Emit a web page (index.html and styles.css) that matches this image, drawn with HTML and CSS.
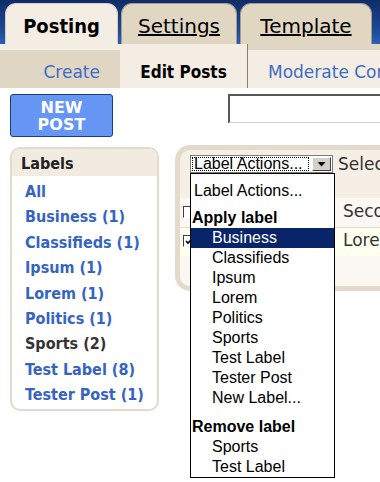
FILE: index.html
```html
<!DOCTYPE html>
<html>
<head>
<meta charset="utf-8">
<title>Edit Posts</title>
<link rel="stylesheet" href="styles.css">
</head>
<body>
<div class="topbar">
  <div class="tab tab-posting active">Posting</div>
  <div class="tab tab-settings"><a class="tab-link">Settings</a></div>
  <div class="tab tab-template"><a class="tab-link">Template</a></div>
</div>
<div class="subnav">
  <div class="sub sub-create"><a class="sub-link">Create</a></div>
  <div class="sub sub-edit">Edit Posts</div>
  <div class="sub sub-moderate"><a class="sub-link">Moderate Comments</a></div>
</div>
<div class="main">
  <div class="leftcol">
    <div class="newpost"><div class="np-line">NEW</div><div class="np-line">POST</div></div>
    <div class="labels">
      <div class="labels-head">Labels</div>
      <ul class="labels-list">
        <li><a class="label-link">All</a></li>
        <li><a class="label-link">Business (1)</a></li>
        <li><a class="label-link">Classifieds (1)</a></li>
        <li><a class="label-link">Ipsum (1)</a></li>
        <li><a class="label-link">Lorem (1)</a></li>
        <li><a class="label-link">Politics (1)</a></li>
        <li class="label-current">Sports (2)</li>
        <li><a class="label-link">Test Label (8)</a></li>
        <li><a class="label-link">Tester Post (1)</a></li>
      </ul>
    </div>
  </div>
  <div class="rightcol">
    <div class="searchrow"><div class="search"></div></div>
    <div class="panel">
      <div class="panel-top">
        <div class="select">
          <span class="select-text">Label Actions...</span>
          <span class="select-btn"><svg width="9" height="5" viewBox="0 0 9 5"><path d="M0.5 0h8L4.5 4.5z" fill="#000"/></svg></span>
        </div>
        <span class="select-hint">Select: All, None</span>
      </div>
      <div class="row row-first"><span class="cb"></span><span class="row-title">Second post</span></div>
      <div class="row row-second"><span class="cb cb-checked"><svg width="9" height="9" viewBox="0 0 9 9"><path d="M1 4l2 2 5-5" stroke="#000" stroke-width="1.6" fill="none"/></svg></span><span class="row-title">Lorem ipsum</span></div>
      <div class="panel-bottom"></div>
    </div>
  </div>
</div>
<div class="dropdown">
  <div class="dd-first">Label Actions...</div>
  <div class="dd-group dd-apply">Apply label</div>
  <div class="dd-item dd-selected">Business</div>
  <div class="dd-item">Classifieds</div>
  <div class="dd-item">Ipsum</div>
  <div class="dd-item">Lorem</div>
  <div class="dd-item">Politics</div>
  <div class="dd-item">Sports</div>
  <div class="dd-item">Test Label</div>
  <div class="dd-item">Tester Post</div>
  <div class="dd-item">New Label...</div>
  <div class="dd-group dd-remove">Remove label</div>
  <div class="dd-item">Sports</div>
  <div class="dd-item">Test Label</div>
</div>
</body>
</html>
```
FILE: styles.css
```css
html, body {
  margin: 0;
  padding: 0;
}
body {
  width: 380px;
  height: 482px;
  overflow: hidden;
  background: #ffffff;
  font-family: "DejaVu Sans", Verdana, sans-serif;
  position: relative;
  color: #000;
}

/* top tabs */
.topbar {
  height: 44px;
  box-sizing: border-box;
  background: linear-gradient(#0e2c68, #1d4b98 70%, #2b60b8);
  display: flex;
  align-items: flex-end;
  padding-left: 5px;
  gap: 3px;
  overflow: hidden;
}
.tab {
  flex: none;
  height: 41px;
  box-sizing: border-box;
  border: 1px solid #a89c88;
  border-bottom: none;
  border-radius: 11px 11px 0 0;
  background: #e1d6c2;
  font-size: 20px;
  line-height: 24px;
  padding-top: 10px;
  text-align: center;
  white-space: nowrap;
}
.tab-posting {
  width: 113px;
  background: #f4ede3;
  border-color: #d8cebe;
  font-family: "DejaVu Sans Condensed", "DejaVu Sans", sans-serif;
  font-stretch: condensed;
  font-weight: bold;
}
.tab-settings { width: 116px; }
.tab-template { width: 132px; }
.tab-link {
  color: #000;
  text-decoration: underline;
}

/* sub navigation */
.subnav {
  height: 44px;
  display: flex;
  background: #f4ede3;
  overflow: hidden;
}
.sub {
  height: 44px;
  box-sizing: border-box;
  font-size: 17px;
  line-height: 20px;
  padding-top: 18px;
  white-space: nowrap;
}
.sub-create {
  flex: none;
  width: 120px;
  text-align: right;
  padding-right: 20px;
  background: linear-gradient(#f4ede3 0 6px, #e0d6c4 6px);
}
.sub-edit {
  flex: none;
  width: 128px;
  text-align: center;
  background: #f4ede3;
  font-family: "DejaVu Sans Condensed", "DejaVu Sans", sans-serif;
  font-stretch: condensed;
  font-weight: bold;
  border-right: 1px solid #8c8070;
}
.sub-moderate {
  flex: 1;
  min-width: 0;
  overflow: hidden;
  padding-left: 20px;
  background: linear-gradient(#e0d6c4 0 6px, #f4ede3 6px);
}
.sub-link {
  color: #3f6cc6;
}

/* main area */
.main {
  display: flex;
  gap: 16px;
  padding: 6px 0 0 10px;
}
.leftcol {
  width: 149px;
  flex: none;
}
.rightcol {
  flex: 1;
  min-width: 0;
}
.newpost {
  width: 103px;
  height: 43px;
  box-sizing: border-box;
  background: #6596f4;
  border: 1px solid #17407f;
  border-radius: 3px;
  color: #fff;
  font-weight: bold;
  font-size: 16px;
  padding-top: 5px;
  text-align: center;
}
.np-line {
  height: 17px;
  line-height: 15px;
}
.labels {
  margin-top: 10px;
  border: 2px solid #e4dacb;
  border-radius: 10px;
  overflow: hidden;
  background: #fff;
}
.labels-head {
  height: 27px;
  box-sizing: border-box;
  background: #f2ebe1;
  font-family: "DejaVu Sans Condensed", "DejaVu Sans", sans-serif;
  font-stretch: condensed;
  font-weight: bold;
  font-size: 16px;
  line-height: 20px;
  padding: 5px 0 0 9px;
  color: #222;
}
.labels-list {
  list-style: none;
  margin: 0;
  padding: 3px 0 1px 13px;
  font-family: "DejaVu Sans Condensed", "DejaVu Sans", sans-serif;
  font-stretch: condensed;
  font-weight: bold;
  font-size: 16px;
  line-height: 25.4px;
  white-space: nowrap;
}
.label-link {
  color: #3564c2;
}
.label-current {
  color: #333;
}

/* right column */
.searchrow {
  padding-left: 53px;
  height: 29px;
}
.search {
  height: 29px;
  box-sizing: border-box;
  width: 200px;
  border-top: 2px solid #565656;
  border-left: 2px solid #565656;
  border-bottom: 1px solid #d4d0c8;
  background: #fff;
}
.panel {
  margin-top: 22px;
  border: 5px solid #e4dacb;
  border-right: none;
  border-radius: 15px 0 0 15px;
  background: #f5efe6;
  overflow: hidden;
}
.panel-top {
  height: 48px;
  box-sizing: border-box;
  display: flex;
  align-items: flex-start;
  padding: 5px 0 0 10px;
  gap: 5px;
}
.select {
  width: 143px;
  height: 18px;
  box-sizing: border-box;
  border: 1px solid #7a7a7a;
  background: #fff;
  display: flex;
  align-items: stretch;
  padding: 1px;
  flex: none;
}
.select-text {
  flex: 1;
  border: 1px dotted #000;
  font-family: "Liberation Sans", Arial, sans-serif;
  font-size: 16px;
  line-height: 12px;
  padding-left: 1px;
  margin-right: 3px;
  white-space: nowrap;
}
.select-btn {
  width: 19px;
  box-sizing: border-box;
  background: #d4d0c8;
  border: 1px solid;
  border-color: #fff #404040 #404040 #fff;
  display: flex;
  align-items: center;
  justify-content: center;
}
.select-hint {
  font-size: 17px;
  line-height: 20px;
  color: #333;
  white-space: nowrap;
  margin-top: -1px;
}
.row {
  display: flex;
  align-items: flex-start;
  font-size: 17px;
  line-height: 20px;
  color: #333;
  white-space: nowrap;
}
.row-first {
  height: 30px;
  box-sizing: border-box;
  background: #fbf8f3;
  border-bottom: 1px solid #e4dacb;
  padding-top: 3px;
}
.row-second {
  height: 28px;
  box-sizing: border-box;
  background: #fffff0;
  padding-top: 2px;
}
.cb {
  width: 12px;
  height: 12px;
  box-sizing: border-box;
  margin: 5px 0 0 3px;
  border: 1px solid;
  border-color: #404040 #fff #fff #404040;
  background: #fff;
  flex: none;
  display: flex;
  align-items: center;
  justify-content: center;
}
.row-title {
  margin-left: 148px;
}
.panel-bottom {
  height: 30px;
  background: #fbf8f3;
}

/* open dropdown list */
.dropdown {
  position: absolute;
  left: 190px;
  top: 173px;
  width: 145px;
  height: 305px;
  box-sizing: border-box;
  border: 1px solid #000;
  background: #fff;
  font-family: "Liberation Sans", Arial, sans-serif;
  font-size: 16px;
  line-height: 20px;
  white-space: nowrap;
}
.dd-first {
  padding: 7px 0 0 3px;
}
.dd-group {
  font-weight: bold;
  padding-left: 1px;
}
.dd-apply {
  margin-top: 7px;
}
.dd-remove {
  margin-top: 9px;
}
.dd-item {
  padding-left: 21px;
}
.dd-selected {
  background: #0a246a;
  color: #fff;
}
```
